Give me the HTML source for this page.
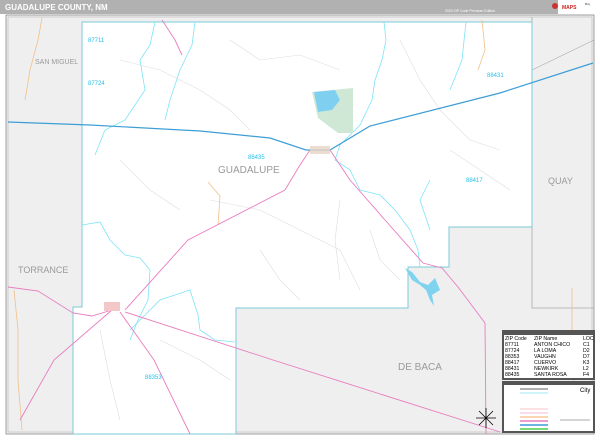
<!DOCTYPE html>
<html><head><style>
body{margin:0;width:600px;height:436px;overflow:hidden;background:#fff;font-family:"Liberation Sans",sans-serif}
</style></head><body>
<svg width="600" height="436" viewBox="0 0 600 436" xmlns="http://www.w3.org/2000/svg" font-family="Liberation Sans, sans-serif">
<rect width="600" height="436" fill="#fff"/>
<rect x="0" y="0" width="600" height="14" fill="#b1b1b1"/>
<text x="5" y="10" font-size="8" font-weight="bold" fill="#fff">GUADALUPE COUNTY, NM</text>
<text x="495" y="12" font-size="3.5" fill="#fff" text-anchor="end">2020 ZIP Code Premium Edition</text>
<rect x="558" y="0" width="42" height="14" fill="#fff"/>
<circle cx="555" cy="6" r="3" fill="#c33"/>
<text x="562" y="9" font-size="5" fill="#c22" font-weight="bold">MAPS</text>
<text x="585" y="5" font-size="3" fill="#333">Buy</text>
<rect x="6" y="15" width="588" height="419" fill="#f0f0f0" stroke="#888" stroke-width="0.8"/>
<rect x="8" y="17" width="584" height="415" fill="#efefef" stroke="#aaa" stroke-width="0.5"/>
<polyline points="532,17 532,308 594,308" fill="none" stroke="#aaa" stroke-width="0.8"/>
<line x1="532" y1="70" x2="594" y2="40" stroke="#999" stroke-width="0.5"/>
<polygon points="82,22 532,22 532,227 449,227 449,267 408,267 408,308 236,308 236,434 73,434 73,307 82,307" fill="#fff" stroke="#7ccbd8" stroke-width="1"/>
<!-- faint roads -->
<g fill="none" stroke="#ddd" stroke-width="0.6">
<polyline points="120,60 160,70 200,90 230,110 250,130"/>
<polyline points="230,40 260,60 300,55 340,70"/>
<polyline points="400,40 420,80 440,110 470,140 500,150"/>
<polyline points="210,200 260,210 300,230 340,250 360,290"/>
<polyline points="340,200 335,240 340,280"/>
<polyline points="120,160 150,190 180,210"/>
<polyline points="260,250 280,280 300,300"/>
<polyline points="370,230 380,260 400,280"/>
<polyline points="100,330 110,380 120,420"/>
<polyline points="160,340 200,360 230,380"/>
<polyline points="450,150 480,170 510,190"/>
</g>
<g fill="none" stroke="#f0c08a" stroke-width="0.8">
<polyline points="42,18 38,40 30,70 25,100"/>
<polyline points="14,290 18,330 18,380 22,430"/>
<polyline points="208,182 220,196 218,225"/>
<polyline points="482,20 485,50 478,70"/>
<polyline points="572,288 572,330 575,420"/>
</g>
<g fill="none" stroke="#7fe3f7" stroke-width="0.8">
<polyline points="155,22 150,45 140,60 145,90 125,120 105,130 95,155"/>
<polyline points="195,22 192,45 180,70 170,100 165,120"/>
<polyline points="384,22 386,40 382,60 375,80 372,100 360,125 340,145 335,160 350,170 360,190 380,195 395,210 410,230 418,250 420,267"/>
<polyline points="466,22 462,60 450,90"/>
<polyline points="82,225 100,222 110,240 125,255 140,258 150,270 148,300 138,320 130,340"/>
<polyline points="130,330 160,300 190,290 198,315 200,330 215,340 235,342"/>
<polyline points="430,180 420,200 425,215 430,230"/>
</g>
<path d="M405,268 L412,280 420,285 426,290 430,300 434,306 432,295 440,290 435,278 428,285 420,282 412,272Z" fill="#7fd3ef"/>
<polygon points="312,92 353,88 353,133 338,133 318,118" fill="#cfe8d6"/>
<path d="M314,92 L335,90 340,100 332,110 318,112Z" fill="#7fd0f0"/>
<polyline points="8,122 90,125 200,131 270,138 306,150 330,150 370,126 500,93 593,63" fill="none" stroke="#3d9ed6" stroke-width="1.2"/>
<g fill="none" stroke="#e87cc0" stroke-width="0.9">
<polyline points="162,20 175,40 182,55"/>
<polyline points="310,150 300,165 285,190 188,240 125,310"/>
<polyline points="330,150 350,180 385,220 423,263 442,268 458,287 485,323 486,434"/>
<polyline points="8,287 38,291 73,313 92,316 112,310"/>
<polyline points="125,312 273,360 500,432"/>
<polyline points="112,310 54,360 20,420"/>
<polyline points="120,312 154,360 190,434"/>
</g>
<rect x="104" y="302" width="16" height="9" fill="#f4c8c8"/>
<rect x="310" y="146" width="20" height="8" fill="#e8d4c4" opacity="0.8"/>
<g fill="#9a9a9a">
<text x="35" y="64" font-size="7">SAN MIGUEL</text>
<text x="218" y="173" font-size="10">GUADALUPE</text>
<text x="18" y="273" font-size="9">TORRANCE</text>
<text x="548" y="184" font-size="9">QUAY</text>
<text x="398" y="370" font-size="10">DE BACA</text>
</g>
<g fill="#29c0ea" font-size="6">
<text x="88" y="42">87711</text>
<text x="88" y="85">87724</text>
<text x="248" y="159">88435</text>
<text x="466" y="182">88417</text>
<text x="487" y="77">88431</text>
<text x="145" y="379">88353</text>
</g>
<g stroke="#000" stroke-width="0.8"><line x1="486" y1="408" x2="486" y2="428"/><line x1="476" y1="418" x2="496" y2="418"/><line x1="479" y1="411" x2="493" y2="425"/><line x1="493" y1="411" x2="479" y2="425"/></g>
<rect x="502" y="330" width="93" height="50" fill="#555"/>
<rect x="504" y="335" width="89" height="43" fill="#fff"/>
<g font-size="5.2" fill="#000">
<text x="505" y="340">ZIP Code</text><text x="534" y="340">ZIP Name</text><text x="583" y="340">LOC</text>
<text x="505" y="346">87711</text><text x="534" y="346">ANTON CHICO</text><text x="583" y="346">C1</text>
<text x="505" y="352">87724</text><text x="534" y="352">LA LOMA</text><text x="583" y="352">D2</text>
<text x="505" y="358">88353</text><text x="534" y="358">VAUGHN</text><text x="583" y="358">D7</text>
<text x="505" y="364">88417</text><text x="534" y="364">CUERVO</text><text x="583" y="364">K3</text>
<text x="505" y="370">88431</text><text x="534" y="370">NEWKIRK</text><text x="583" y="370">L2</text>
<text x="505" y="376">88435</text><text x="534" y="376">SANTA ROSA</text><text x="583" y="376">F4</text>
</g>
<rect x="502" y="381" width="93" height="52" fill="#555"/>
<rect x="504" y="385" width="89" height="46" fill="#fff"/>
<g stroke-width="1.5">
<line x1="520" y1="389" x2="548" y2="389" stroke="#999"/>
<line x1="520" y1="393" x2="548" y2="393" stroke="#bdf0f8"/>
<line x1="520" y1="409" x2="548" y2="409" stroke="#fbd8dc"/>
<line x1="520" y1="413" x2="548" y2="413" stroke="#f8d0e8"/>
<line x1="520" y1="417" x2="548" y2="417" stroke="#f6c89a"/>
<line x1="520" y1="421" x2="548" y2="421" stroke="#e87cc0"/>
<line x1="520" y1="425" x2="548" y2="425" stroke="#3d9ed6"/>
<line x1="520" y1="429" x2="548" y2="429" stroke="#4ccf4c"/>
</g>
<text x="580" y="392" font-size="6" fill="#000">City</text>
<line x1="560" y1="420" x2="590" y2="420" stroke="#555" stroke-width="0.5"/>
</svg>
</body></html>
